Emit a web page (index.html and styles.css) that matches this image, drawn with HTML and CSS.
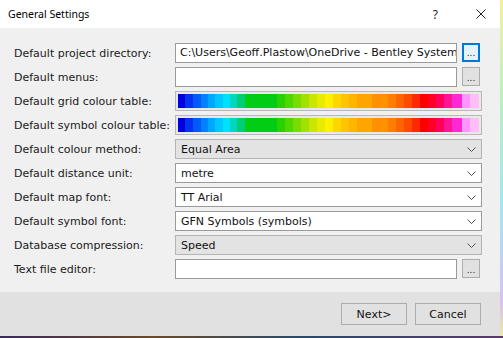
FILE: index.html
```html
<!DOCTYPE html>
<html>
<head>
<meta charset="utf-8">
<link rel="stylesheet" href="styles.css">
</head>
<body>
<div class="window">
  <div class="titlebar">
    <span class="title">General Settings</span>
    <span class="help">?</span>
    <svg class="close" width="10" height="10" viewBox="0 0 10 10"><path d="M0.5 0.5 L9.5 9.5 M9.5 0.5 L0.5 9.5" stroke="#222" stroke-width="1"/></svg>
  </div>
  <div class="content">
    <div class="form">
      <label class="lbl">Default project directory:</label>
      <div class="browse-row">
        <div class="input">C:\Users\Geoff.Plastow\OneDrive - Bentley Systems</div>
        <button class="dots focused">...</button>
      </div>

      <label class="lbl">Default menus:</label>
      <div class="browse-row">
        <div class="input"></div>
        <button class="dots">...</button>
      </div>

      <label class="lbl">Default grid colour table:</label>
      <div class="ramp-box"><div class="ramp"></div></div>

      <label class="lbl">Default symbol colour table:</label>
      <div class="ramp-box"><div class="ramp"></div></div>

      <label class="lbl">Default colour method:</label>
      <div class="select readonly"><span>Equal Area</span><svg class="chev" width="9" height="5" viewBox="0 0 9 5"><path d="M0.5 0.5 L4.5 4.5 L8.5 0.5" fill="none" stroke="#555" stroke-width="1"/></svg></div>

      <label class="lbl">Default distance unit:</label>
      <div class="select"><span>metre</span><svg class="chev" width="9" height="5" viewBox="0 0 9 5"><path d="M0.5 0.5 L4.5 4.5 L8.5 0.5" fill="none" stroke="#555" stroke-width="1"/></svg></div>

      <label class="lbl">Default map font:</label>
      <div class="select"><span>TT Arial</span><svg class="chev" width="9" height="5" viewBox="0 0 9 5"><path d="M0.5 0.5 L4.5 4.5 L8.5 0.5" fill="none" stroke="#555" stroke-width="1"/></svg></div>

      <label class="lbl">Default symbol font:</label>
      <div class="select"><span>GFN Symbols (symbols)</span><svg class="chev" width="9" height="5" viewBox="0 0 9 5"><path d="M0.5 0.5 L4.5 4.5 L8.5 0.5" fill="none" stroke="#555" stroke-width="1"/></svg></div>

      <label class="lbl">Database compression:</label>
      <div class="select readonly"><span>Speed</span><svg class="chev" width="9" height="5" viewBox="0 0 9 5"><path d="M0.5 0.5 L4.5 4.5 L8.5 0.5" fill="none" stroke="#555" stroke-width="1"/></svg></div>

      <label class="lbl">Text file editor:</label>
      <div class="browse-row">
        <div class="input"></div>
        <button class="dots">...</button>
      </div>
    </div>
  </div>
  <div class="footer">
    <button class="btn">Next&gt;</button>
    <button class="btn">Cancel</button>
  </div>
</div>
</body>
</html>
```

FILE: styles.css
```css
html, body {
  margin: 0;
  padding: 0;
}
body {
  width: 503px;
  height: 338px;
  overflow: hidden;
  background: linear-gradient(90deg, #3a2a5a, #6a4a2a 30%, #2a4a6a 60%, #5a3a6a);
  font-family: "DejaVu Sans", sans-serif;
  font-size: 11px;
  color: #000;
  position: relative;
}
body::after {
  content: "";
  position: absolute;
  right: 0;
  top: 0;
  width: 3px;
  height: 336px;
  background: linear-gradient(180deg, #f4f0a0, #b8f0c0 30%, #a0e8f0 60%, #d8c0f0 90%, #f0e8a0);
}
.window {
  width: 500px;
  height: 336px;
  background: #f0f0f0;
  display: flex;
  flex-direction: column;
}
.titlebar {
  height: 28px;
  background: #fff;
  display: flex;
  align-items: center;
  padding-left: 8px;
  flex: none;
}
.title {
  font-family: "Noto Sans", "Open Sans", sans-serif;
  font-size: 10.5px;
  color: #000;
  flex: 1;
}
.help {
  font-family: "Noto Sans", sans-serif;
  font-size: 12px;
  color: #222;
  margin-right: 38px;
}
.close {
  margin-right: 14px;
}
.content {
  flex: 1;
  padding: 15px 18px 0 14px;
}
.form {
  display: grid;
  grid-template-columns: 161px minmax(0, 1fr);
  grid-auto-rows: 20px;
  row-gap: 4px;
}
.lbl {
  display: flex;
  align-items: center;
  color: #1a1a1a;
  white-space: nowrap;
}
.browse-row {
  display: flex;
  gap: 5px;
  align-items: flex-start;
  padding-right: 2px;
  min-width: 0;
}
.input {
  flex: 1;
  min-width: 0;
  height: 20px;
  box-sizing: border-box;
  border: 1px solid #9a9a9a;
  background: #fff;
  padding: 0 4px;
  line-height: 18px;
  white-space: nowrap;
  overflow: hidden;
  color: #111;
}
.dots {
  flex: none;
  width: 18px;
  height: 19px;
  box-sizing: border-box;
  margin: 0;
  padding: 0;
  border: 1px solid #adadad;
  background: #e1e1e1;
  font-family: "DejaVu Sans", sans-serif;
  font-size: 9px;
  line-height: 14px;
  color: #222;
  display: flex;
  align-items: flex-end;
  justify-content: center;
}
.dots.focused {
  border: 2px solid #0078d7;
  background: #e5f1fb;
}
.ramp-box {
  height: 20px;
  box-sizing: border-box;
  border: 1px solid #b8b8b8;
  background: #e8e8e8;
  padding: 2px;
}
.ramp {
  height: 100%;
  background: linear-gradient(90deg,
    #0000dc 0 7px,
    #0032f0 7px 15px,
    #005afa 15px 23px,
    #0082ff 23px 30px,
    #00a5ff 30px 37px,
    #00c8ff 37px 45px,
    #00e1ff 45px 52px,
    #00d7be 52px 59px,
    #00cd78 59px 67px,
    #00cd14 67px 99px,
    #28d200 99px 107px,
    #50d700 107px 115px,
    #78dc00 115px 123px,
    #a0e100 123px 131px,
    #c8e600 131px 139px,
    #e6eb00 139px 147px,
    #fff000 147px 155px,
    #ffd700 155px 163px,
    #ffc300 163px 171px,
    #ffb400 171px 179px,
    #ffa500 179px 194px,
    #ff9100 194px 210px,
    #ff7d00 210px 218px,
    #ff6400 218px 226px,
    #ff4b00 226px 234px,
    #ff2800 234px 242px,
    #ff0000 242px 250px,
    #ff0028 250px 258px,
    #ff005a 258px 266px,
    #ff1496 266px 274px,
    #ff28d2 274px 284px,
    #ff96ff 284px 292px,
    #ffbef5 292px 300px);
}
.select {
  height: 20px;
  box-sizing: border-box;
  border: 1px solid #9a9a9a;
  background: #fff;
  display: flex;
  align-items: center;
  padding: 0 5px 0 5px;
  color: #111;
}
.select.readonly {
  background: #e3e3e3;
  border-color: #b5b5b5;
}
.select span {
  flex: 1;
}
.footer {
  height: 44px;
  flex: none;
  background: #e1e1e1;
  display: flex;
  justify-content: flex-end;
  align-items: flex-start;
  gap: 8px;
  padding: 11px 19px 0 0;
  box-sizing: border-box;
}
.btn {
  width: 66px;
  height: 22px;
  margin: 0;
  padding: 0;
  border: 1px solid #adadad;
  background: #e1e1e1;
  font-family: "DejaVu Sans", sans-serif;
  font-size: 11px;
  color: #111;
}
```
